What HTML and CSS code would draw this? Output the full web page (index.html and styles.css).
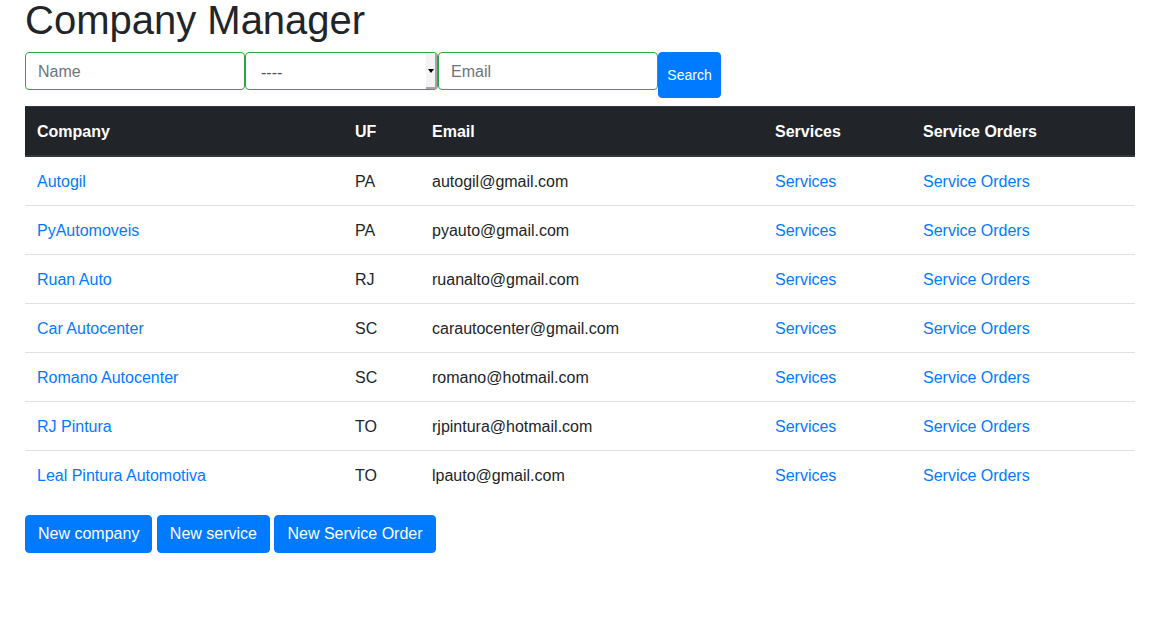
FILE: index.html
```html
<!DOCTYPE html>
<html lang="en">
<head>
<meta charset="utf-8">
<title>Company Manager</title>
<link rel="stylesheet" href="styles.css">
</head>
<body>
<div class="container">
  <h1 class="title">Company Manager</h1>
  <form class="search-form">
    <input class="field field-name" type="text" placeholder="Name">
    <div class="select-wrap">
      <select class="field field-select">
        <option>----</option>
      </select>
      <span class="select-arrow"><span class="tri"></span></span>
    </div>
    <input class="field field-email" type="text" placeholder="Email">
    <button class="btn btn-search" type="button">Search</button>
  </form>
  <table class="table">
    <colgroup>
      <col class="c-company">
      <col class="c-uf">
      <col class="c-email">
      <col class="c-services">
      <col class="c-orders">
    </colgroup>
    <thead>
      <tr><th>Company</th><th>UF</th><th>Email</th><th>Services</th><th>Service Orders</th></tr>
    </thead>
    <tbody>
      <tr><td><a href="#">Autogil</a></td><td>PA</td><td>autogil@gmail.com</td><td><a href="#">Services</a></td><td><a href="#">Service Orders</a></td></tr>
      <tr><td><a href="#">PyAutomoveis</a></td><td>PA</td><td>pyauto@gmail.com</td><td><a href="#">Services</a></td><td><a href="#">Service Orders</a></td></tr>
      <tr><td><a href="#">Ruan Auto</a></td><td>RJ</td><td>ruanalto@gmail.com</td><td><a href="#">Services</a></td><td><a href="#">Service Orders</a></td></tr>
      <tr><td><a href="#">Car Autocenter</a></td><td>SC</td><td>carautocenter@gmail.com</td><td><a href="#">Services</a></td><td><a href="#">Service Orders</a></td></tr>
      <tr><td><a href="#">Romano Autocenter</a></td><td>SC</td><td>romano@hotmail.com</td><td><a href="#">Services</a></td><td><a href="#">Service Orders</a></td></tr>
      <tr><td><a href="#">RJ Pintura</a></td><td>TO</td><td>rjpintura@hotmail.com</td><td><a href="#">Services</a></td><td><a href="#">Service Orders</a></td></tr>
      <tr><td><a href="#">Leal Pintura Automotiva</a></td><td>TO</td><td>lpauto@gmail.com</td><td><a href="#">Services</a></td><td><a href="#">Service Orders</a></td></tr>
    </tbody>
  </table>
  <div class="actions">
    <a class="btn" href="#">New company</a>
    <a class="btn" href="#">New service</a>
    <a class="btn" href="#">New Service Order</a>
  </div>
</div>
</body>
</html>
```
FILE: styles.css
```css
* { box-sizing: border-box; }
html, body { margin: 0; padding: 0; }
body {
  font-family: "Liberation Sans", Arial, sans-serif;
  font-size: 16px;
  line-height: 24px;
  color: #212529;
  background: #fff;
  padding-left: 25px;
}
.container {
  width: 1110px;
}
.title {
  font-size: 40px;
  font-weight: 400;
  line-height: 40px;
  margin: 0 0 12px;
}
.search-form {
  display: flex;
  align-items: flex-start;
  margin-bottom: 8px;
}
.field {
  height: 38px;
  border: 1px solid #28a745;
  border-radius: 4px;
  font-family: inherit;
  font-size: 16px;
  color: #495057;
  padding: 7px 12px 5px;
  background: #fff;
  outline: none;
}
.field::placeholder { color: #6c757d; }
.field-name { width: 220px; }
.select-wrap {
  position: relative;
  width: 193px;
  height: 38px;
}
.field-select {
  width: 193px;
  padding-left: 15px;
  -webkit-appearance: none;
  appearance: none;
}
.select-arrow {
  position: absolute;
  right: 1px;
  top: 1px;
  width: 11px;
  height: 36px;
  background: #f3f3f5;
  border-right: 2px solid #a5a5a5;
  border-bottom: 2px solid #a5a5a5;
  display: flex;
  align-items: center;
  justify-content: center;
  pointer-events: none;
}
.tri {
  width: 0;
  height: 0;
  border-left: 3px solid transparent;
  border-right: 3px solid transparent;
  border-top: 4px solid #000;
  margin-top: 2px;
}
.field-email { width: 220px; }
.btn {
  display: inline-block;
  background: #007bff;
  color: #fff;
  border: 1px solid #007bff;
  border-radius: 4px;
  font-family: inherit;
  font-size: 16px;
  line-height: 24px;
  padding: 6px 12px;
  text-decoration: none;
}
.btn-search {
  font-size: 14px;
  height: 46px;
  width: 63px;
  padding: 0;
  line-height: 44px;
}
.table {
  width: 1110px;
  border-collapse: collapse;
  table-layout: fixed;
  margin-bottom: 16px;
}
.c-company { width: 318px; }
.c-uf { width: 77px; }
.c-email { width: 343px; }
.c-services { width: 148px; }
.c-orders { width: 224px; }
.table th {
  background: #212529;
  color: #fff;
  font-weight: 700;
  text-align: left;
  padding: 13px 12px 11px;
  border-top: 1px solid #32383e;
  border-bottom: 2px solid #32383e;
}
.table td {
  padding: 13px 12px 11px;
  border-top: 1px solid #dee2e6;
}
.table tbody tr:first-child td { border-top: none; }
.table a { color: #007bff; text-decoration: none; }
.actions { display: block; }
.actions .btn { margin-right: 0; }
```
